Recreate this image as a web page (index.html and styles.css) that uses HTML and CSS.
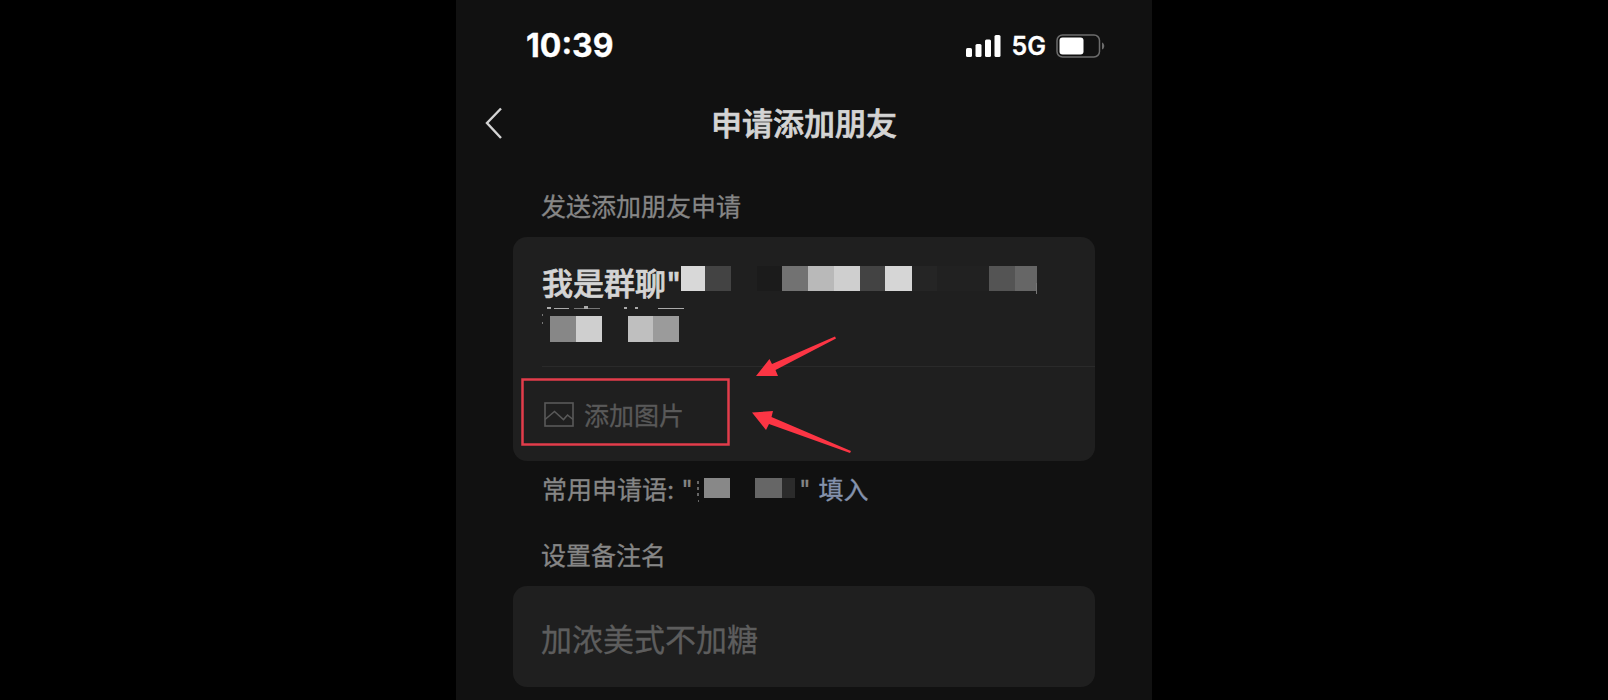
FILE: index.html
```html
<!DOCTYPE html>
<html lang="zh-CN">
<head>
<meta charset="utf-8">
<meta name="viewport" content="width=device-width, initial-scale=1">
<title>申请添加朋友</title>
<link rel="stylesheet" href="styles.css">
</head>
<body>
<main class="phone">
  <div class="status">
    <time class="clock">10:39</time>
    <div class="indicators">
      <svg class="signal" width="36" height="24" viewBox="0 0 36 24" fill="#fff" aria-hidden="true">
        <rect x="0" y="14" width="6" height="9" rx="1.5"/>
        <rect x="9.500" y="10" width="6" height="13" rx="1.500"/>
        <rect x="19" y="5.500" width="6" height="17.500" rx="1.500"/>
        <rect x="28.500" y="1" width="6" height="22" rx="1.500"/>
      </svg>
      <span class="network">5G</span>
      <svg class="battery" width="50" height="24" viewBox="0 0 50 24" aria-hidden="true">
        <rect x="1" y="1" width="42.500" height="22" rx="5.500" fill="none" stroke="#6c6c6c" stroke-width="1.500"/>
        <rect x="3.500" y="3.500" width="24" height="17" rx="3" fill="#fff"/>
        <path d="M46 8.500c3 1 3 6 0 7z" fill="#6c6c6c"/>
      </svg>
    </div>
  </div>

  <header class="nav">
    <button class="back" type="button" aria-label="返回">
      <svg width="18" height="34" viewBox="0 0 18 34" fill="none" stroke="#d4d4d4" stroke-width="2.400" aria-hidden="true"><path d="M16 1.500 2 16 16 31"/></svg>
    </button>
    <h1 class="title">申请添加朋友</h1>
  </header>

  <section class="content">
    <h2 class="label">发送添加朋友申请</h2>
    <div class="card request">
      <div class="message">
        <p class="message-text">我是群聊"</p>
        <svg class="mosaic" width="510" height="90" viewBox="0 0 510 90" shape-rendering="crispEdges" aria-hidden="true">
          <rect x="139" y="4" width="24" height="25" fill="#d8d8d8"/>
          <rect x="163" y="4" width="26" height="25" fill="#434343"/>
          <rect x="215" y="4" width="25" height="25" fill="#1b1b1b"/>
          <rect x="240" y="4" width="26" height="25" fill="#727272"/>
          <rect x="266" y="4" width="26" height="25" fill="#b9b9b9"/>
          <rect x="292" y="4" width="26" height="25" fill="#cfcfcf"/>
          <rect x="318" y="4" width="25" height="25" fill="#434343"/>
          <rect x="343" y="4" width="27" height="25" fill="#d6d6d6"/>
          <rect x="370" y="4" width="25" height="25" fill="#252525"/>
          <rect x="395" y="4" width="52" height="25" fill="#212121"/>
          <rect x="447" y="4" width="26" height="25" fill="#545454"/>
          <rect x="473" y="4" width="22" height="25" fill="#666"/>
          <path d="M494 21h1v11h-1z" fill="#777"/>
          <g fill="#aaa">
            <rect x="5" y="45" width="4" height="2"/><rect x="12" y="46" width="15" height="1"/>
            <rect x="32" y="46" width="26" height="1" fill="#777"/><rect x="42" y="44" width="4" height="3"/>
            <rect x="82" y="45" width="3" height="2"/><rect x="93" y="45" width="3" height="2"/>
            <rect x="116" y="46" width="26" height="1"/>
            <rect x="0" y="52" width="1" height="2" fill="#777"/><rect x="0" y="60" width="1" height="2" fill="#777"/>
          </g>
          <rect x="8" y="54" width="26" height="26" fill="#878787"/>
          <rect x="34" y="54" width="26" height="26" fill="#cfcfcf"/>
          <rect x="86" y="54" width="25" height="26" fill="#bfbfbf"/>
          <rect x="111" y="54" width="26" height="26" fill="#9b9b9b"/>
        </svg>
      </div>
      <button class="add-image" type="button">
        <svg width="30" height="25" viewBox="0 0 30 25" fill="none" stroke="#595959" stroke-width="1.600" aria-hidden="true">
          <rect x="1" y="1" width="28" height="23"/>
          <path d="M1 17.500 10.500 9.500 19.500 17.500 23.500 13 29 17.500"/>
        </svg>
        <span>添加图片</span>
      </button>
      <svg class="marks" width="350" height="224" viewBox="0 0 350 224" aria-hidden="true">
        <rect x="9.500" y="142.500" width="206" height="65" fill="none" stroke="#e23d4b" stroke-width="2.500"/>
        <path d="M243 139 256.500 122 259 127 322 99.500 323 101.500 262.500 133 265 139z" fill="#fc3544"/>
        <path d="M239 175.500 260 174 258.500 180 338 214 337 216 256 187 253 193z" fill="#fc3544"/>
      </svg>
    </div>

    <p class="hint">
      <span>常用申请语: "</span>
      <svg width="104" height="26" viewBox="0 0 104 26" shape-rendering="crispEdges" aria-hidden="true">
        <path d="M2 4h2v3H2zM2 10h2v3H2zM2 16h2v3H2zM3 23h1v2H3z" fill="#666"/>
        <rect x="9" y="1" width="26" height="20" fill="#888"/>
        <rect x="60" y="1" width="27" height="20" fill="#666"/>
        <rect x="87" y="1" width="13" height="20" fill="#2b2b2b"/>
      </svg>
      <span>"</span>
      <a class="fill" href="#remark">填入</a>
    </p>

    <label class="label" for="remark">设置备注名</label>
    <input class="card remark" id="remark" type="text" placeholder="加浓美式不加糖">
  </section>
</main>
</body>
</html>
```
FILE: styles.css
```css
* { box-sizing: border-box; }

body {
  margin: 0;
  background: #000;
  color: #d4d4d4;
  font-family: Inter, "Noto Sans CJK SC", sans-serif;
  -webkit-text-stroke: 0.3px currentColor;
}

h1, h2, p { margin: 0; }

button {
  padding: 0;
  border: 0;
  background: none;
  color: inherit;
  font: inherit;
  cursor: pointer;
}

svg { display: block; flex: none; }

.phone {
  max-width: 696px;
  min-height: 100vh;
  margin: 0 auto;
  padding-bottom: 12px;
  background: #111;
}

.status {
  display: flex;
  align-items: center;
  justify-content: space-between;
  padding: 24px 46px 0 70px;
  line-height: 44px;
  color: #fff;
}

.clock { font-size: 32px; font-weight: 700; }

.indicators { display: flex; align-items: center; gap: 10px; }

.network { font-size: 25px; font-weight: 600; }

.nav {
  display: grid;
  grid-template-columns: 57px 1fr 57px;
  align-items: center;
  height: 64px;
  margin-top: 24px;
}

.back { justify-self: end; padding-right: 10px; }

.title {
  font-size: 31px;
  font-weight: 500;
  line-height: 64px;
  text-align: center;
  -webkit-text-stroke-width: 0.7px;
}

.content { padding: 35px 57px 0; }

.label {
  display: block;
  padding-left: 28px;
  margin-bottom: 14px;
  color: #868686;
  font-size: 25px;
  font-weight: 400;
  line-height: 32px;
}

.card {
  width: 100%;
  border-radius: 14px;
  background: #1f1f1f;
}

.request { position: relative; }

.message {
  position: relative;
  height: 130px;
  margin-left: 29px;
  padding-top: 25px;
  border-bottom: 1px solid #2a2a2a;
}

.message-text {
  font-size: 31px;
  font-weight: 500;
  line-height: 44px;
  -webkit-text-stroke-width: 0.7px;
}

.mosaic { position: absolute; top: 25px; left: 0; }

.add-image {
  display: flex;
  align-items: center;
  gap: 10px;
  width: 100%;
  height: 94px;
  padding-left: 31px;
  color: #595959;
  font-size: 25px;
}

.marks { position: absolute; top: 0; left: 0; pointer-events: none; }

.hint {
  display: flex;
  align-items: center;
  margin: 13px 0 34px;
  padding-left: 29px;
  color: #868686;
  font-size: 25px;
  line-height: 32px;
}

.hint svg { margin-left: 2px; }

.fill { margin-left: 8px; color: #8492ad; text-decoration: none; }

.remark {
  display: block;
  height: 101px;
  padding: 6px 28px 0;
  border: 0;
  outline: 0;
  color: #d4d4d4;
  font: 400 31px/44px Inter, "Noto Sans CJK SC", sans-serif;
}

.remark::placeholder { color: #5d5d5d; opacity: 1; -webkit-text-stroke: 0.3px #5d5d5d; }
```
